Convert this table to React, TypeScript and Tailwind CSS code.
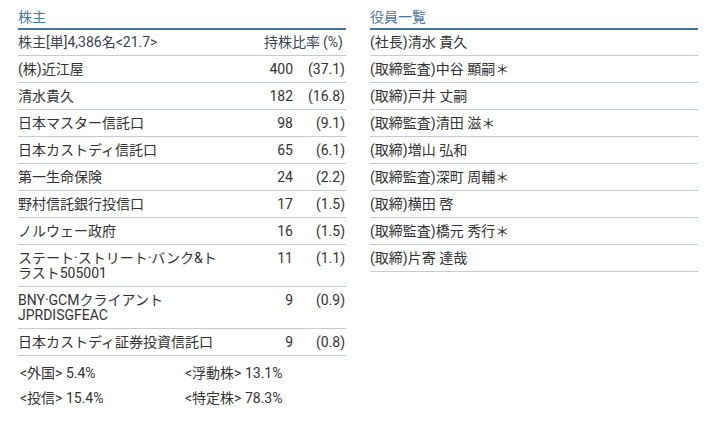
import React from "react";

const holders: { name: React.ReactNode; n: string; p: string }[] = [
  { name: "(株)近江屋", n: "400", p: "(37.1)" },
  { name: "清水貴久", n: "182", p: "(16.8)" },
  { name: "日本マスター信託口", n: "98", p: "(9.1)" },
  { name: "日本カストディ信託口", n: "65", p: "(6.1)" },
  { name: "第一生命保険", n: "24", p: "(2.2)" },
  { name: "野村信託銀行投信口", n: "17", p: "(1.5)" },
  { name: "ノルウェー政府", n: "16", p: "(1.5)" },
  {
    name: (
      <>
        ステート·ストリート·バンク&ト
        <br />
        ラスト505001
      </>
    ),
    n: "11",
    p: "(1.1)",
  },
  {
    name: (
      <>
        BNY·GCMクライアント
        <br />
        JPRDISGFEAC
      </>
    ),
    n: "9",
    p: "(0.9)",
  },
  { name: "日本カストディ証券投資信託口", n: "9", p: "(0.8)" },
];

const officers = [
  "(社長)清水 貴久",
  "(取締監査)中谷 顯嗣＊",
  "(取締)戸井 丈嗣",
  "(取締監査)清田 滋＊",
  "(取締)増山 弘和",
  "(取締監査)深町 周輔＊",
  "(取締)横田 啓",
  "(取締監査)橋元 秀行＊",
  "(取締)片寄 達哉",
];

const font = {
  fontFamily: 'Roboto, "Noto Sans CJK JP", sans-serif',
};

export default function App() {
  return (
    <div
      className="w-[712px] h-[431px] bg-white text-[#333333] text-[14px] flex gap-[24px] pl-[18px] pr-[14px] pt-[9px]"
      style={font}
    >
      <div className="w-[328px] flex flex-col">
        <div className="text-[#4a77a3] leading-[16px] pb-[3px] border-b-[2px] border-[#47719b]">
          株主
        </div>
        <div className="flex items-center justify-between leading-[15px] pt-[5px] pb-[5px] border-b border-[#c4cbd3] text-[#3a4350]">
          <span>株主[単]4,386名&lt;21.7&gt;</span>
          <span className="pr-[3px]">
            持株比率<span className="ml-[3px]">(%)</span>
          </span>
        </div>
        {holders.map((h, i) => (
          <div
            key={i}
            className="flex items-start leading-[15px] pt-[6px] pb-[5px] border-b border-[#c4cbd3]"
          >
            <div className="flex-1">{h.name}</div>
            <div className="w-[40px] text-right">{h.n}</div>
            <div className="w-[53px] text-right pr-[1px]">{h.p}</div>
          </div>
        ))}
        <div className="grid grid-cols-[165px_1fr] gap-y-[10px] pl-[2px] pt-[10px] text-[14px] leading-[15px]">
          <span>&lt;外国&gt; 5.4%</span>
          <span>&lt;浮動株&gt; 13.1%</span>
          <span>&lt;投信&gt; 15.4%</span>
          <span>&lt;特定株&gt; 78.3%</span>
        </div>
      </div>
      <div className="w-[328px] flex flex-col">
        <div className="text-[#4a77a3] leading-[16px] pb-[3px] border-b-[2px] border-[#47719b]">
          役員一覧
        </div>
        {officers.map((o, i) => (
          <div
            key={i}
            className={
              i === 0
                ? "leading-[15px] pt-[5px] pb-[5px] border-b border-[#c4cbd3]"
                : "leading-[15px] pt-[6px] pb-[5px] border-b border-[#c4cbd3]"
            }
          >
            {o}
          </div>
        ))}
      </div>
    </div>
  );
}
